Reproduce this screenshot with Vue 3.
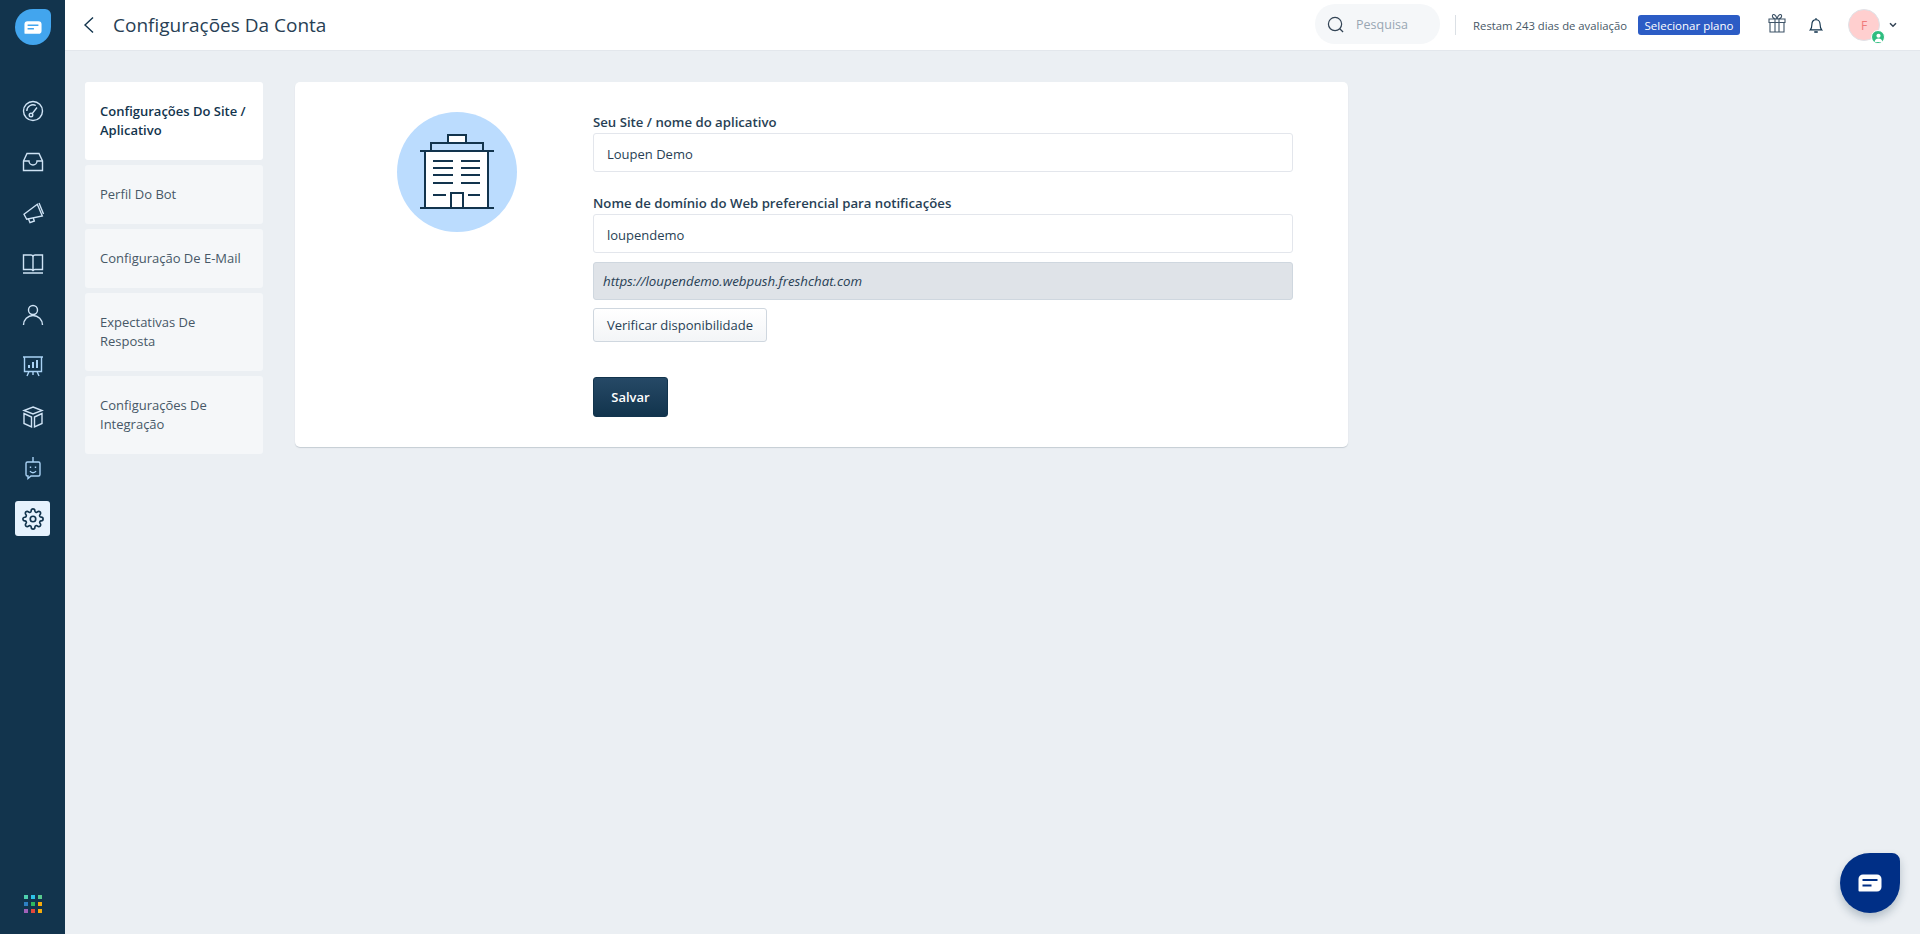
<script setup>
const navItems = [
  { label: 'Configurações Do Site / Aplicativo', active: true, tall: true },
  { label: 'Perfil Do Bot' },
  { label: 'Configuração De E-Mail' },
  { label: 'Expectativas De Resposta', tall: true },
  { label: 'Configurações De Integração', tall: true }
]
const dots = ['#4fcfae', '#2dc3e8', '#58c98d', '#2e80c2', '#2fb85f', '#f5ab0c', '#a061b8', '#e4483a', '#f5ab0c']
const buildingLines = [49, 56, 63, 71]
</script>

<template>
  <div class="app">
    <aside class="sidebar">
      <div class="logo">
        <svg width="18" height="13" viewBox="0 1 20 14"><path d="M4 1h12a3.5 3.5 0 0 1 3.5 3.5v7a3.5 3.5 0 0 1-3.5 3.5H1.5a1 1 0 0 1-1-1V4.500A3.500 3.500 0 0 1 4 1z" fill="#fff"/><path d="M4 5.500h12M4 9.500h7" stroke="#42a5ee" stroke-width="1.700"/></svg>
      </div>
      <nav class="side-nav">
        <a class="side-item">
          <svg viewBox="0 0 24 24" class="ico"><circle cx="12" cy="12" r="9.500"/><circle cx="10" cy="16" r="1.800"/><path d="M11.200 14.600 16 8.500M5.800 12a6.200 6.200 0 0 1 9-5.500"/></svg>
        </a>
        <a class="side-item">
          <svg viewBox="0 0 24 24" class="ico"><path d="M2.500 11 6 3.500h12l3.500 7.500v9.500h-19z"/><path d="M2.500 11H8a4 4 0 0 0 8 0h5.500"/></svg>
        </a>
        <a class="side-item">
          <svg viewBox="0 0 24 24" class="ico"><path d="M3 13.300 16.300 3.300l5 11.700-15.600 3.300z"/><path d="m18 2 4.500 11M7.300 17.500 9 21.700l4.300-1.700-1-3"/></svg>
        </a>
        <a class="side-item">
          <svg viewBox="0 0 24 24" class="ico"><path d="M2.500 3H10a2 2 0 0 1 2 2v14a2 2 0 0 0-2-1.500H2.500zM21.500 3H14a2 2 0 0 0-2 2v14a2 2 0 0 1 2-1.500h7.500zM2 21h20"/></svg>
        </a>
        <a class="side-item">
          <svg viewBox="0 0 24 24" class="ico"><circle cx="12" cy="7" r="4.500"/><path d="M2.500 22a9.500 9.500 0 0 1 19 0"/></svg>
        </a>
        <a class="side-item">
          <svg viewBox="0 0 24 24" class="ico pale"><path d="M2 3h20M3.500 3v14.500h17V3M8 17.500 6 22M16 17.500l2 4.500M12 17.500V21"/><path d="M8 14v-3M12 14V8M16 14V6" stroke-width="2"/></svg>
        </a>
        <a class="side-item">
          <svg viewBox="0 0 24 24" class="ico"><path d="m12 2 9 3.500L12 9 3 5.500z"/><path d="M3 8.500 10.500 12v10L3 18.500zM21 8.500 13.500 12v10l7.500-3.500z"/></svg>
        </a>
        <a class="side-item">
          <svg viewBox="0 0 24 24" class="ico pale"><path d="M12 1v5"/><path d="M6.500 6h11A1.500 1.500 0 0 1 19 7.500v11a1.500 1.500 0 0 1-1.500 1.500H10l-3 2.500V20h-.5A1.500 1.500 0 0 1 5 18.500v-11A1.500 1.500 0 0 1 6.500 6z"/><path d="M9 15a3.500 3.500 0 0 0 6 0M9.500 10.500v1.500M14.500 10.500v1.500"/></svg>
        </a>
        <a class="side-item active">
          <svg viewBox="0 0 24 24" class="ico dark"><circle cx="12" cy="12" r="3"/><path d="M19.400 15a1.650 1.650 0 0 0 .33 1.820l.06.06a2 2 0 0 1 0 2.830 2 2 0 0 1-2.830 0l-.06-.06a1.650 1.650 0 0 0-1.820-.33 1.650 1.650 0 0 0-1 1.510V21a2 2 0 0 1-2 2 2 2 0 0 1-2-2v-.09A1.650 1.650 0 0 0 9 19.400a1.650 1.650 0 0 0-1.820.33l-.06.06a2 2 0 0 1-2.830 0 2 2 0 0 1 0-2.830l.06-.06a1.650 1.650 0 0 0 .33-1.820 1.650 1.650 0 0 0-1.510-1H3a2 2 0 0 1-2-2 2 2 0 0 1 2-2h.09A1.650 1.650 0 0 0 4.600 9a1.650 1.650 0 0 0-.33-1.820l-.06-.06a2 2 0 0 1 0-2.830 2 2 0 0 1 2.830 0l.06.06a1.650 1.650 0 0 0 1.820.33H9a1.650 1.650 0 0 0 1-1.510V3a2 2 0 0 1 2-2 2 2 0 0 1 2 2v.09a1.650 1.650 0 0 0 1 1.510 1.650 1.650 0 0 0 1.820-.33l.06-.06a2 2 0 0 1 2.830 0 2 2 0 0 1 0 2.830l-.06.06a1.650 1.650 0 0 0-.33 1.820V9a1.650 1.650 0 0 0 1.510 1H21a2 2 0 0 1 2 2 2 2 0 0 1-2 2h-.09a1.650 1.650 0 0 0-1.510 1z"/></svg>
        </a>
      </nav>
      <div class="apps">
        <i v-for="(c, i) in dots" :key="i" class="dot" :style="{ background: c }"></i>
      </div>
    </aside>

    <div class="main">
      <header class="topbar">
        <svg class="back" width="12" height="18" viewBox="0 0 12 18"><path d="M10 1.500 2 9l8 7.500" fill="none" stroke="#12344d" stroke-width="1.400"/></svg>
        <h1 class="title">Configurações Da Conta</h1>
        <div class="search">
          <svg width="17" height="17" viewBox="0 0 18 18" fill="none" stroke="#345" stroke-width="1.300"><circle cx="8.500" cy="8.500" r="7"/><path d="m13.500 13.500 3.500 3.500"/></svg>
          <span>Pesquisa</span>
        </div>
        <div class="divider"></div>
        <span class="trial">Restam 243 dias de avaliação</span>
        <button class="plan">Selecionar plano</button>
        <svg class="gift" width="18" height="20" viewBox="0 0 18 20" fill="none" stroke="#3f5468" stroke-width="1.100"><path d="M1 6h16v3.500H1zM2 9.500h14V19H2zM7 6v13M11 6v13M9 6C6 6 4 4.500 4.500 2.500S8 1.500 9 6zm0 0c3 0 5-1.500 4.500-3.500S10 1.500 9 6z"/></svg>
        <svg class="bell" width="14" height="18" viewBox="0 0 16 20" fill="none" stroke="#12344d" stroke-width="1.300"><path d="M1.500 15.500c1.500-1.500 1.800-3 1.800-6C3.300 6 5 4 8 4s4.700 2 4.700 5.500c0 3 .3 4.500 1.800 6z"/><path d="M8 4V2"/><path d="M6 18h4" stroke-width="1.800"/></svg>
        <div class="avatar">
          <span>F</span>
          <i class="status"><svg width="9" height="9" viewBox="0 0 10 10" fill="#fff"><circle cx="5" cy="3" r="2.300"/><path d="M.8 10a4.200 4 0 0 1 8.400 0z"/></svg></i>
        </div>
        <svg class="chev" width="8" height="6" viewBox="0 0 8 6"><path d="m1 1.200 3 3 3-3" fill="none" stroke="#345" stroke-width="1.500"/></svg>
      </header>

      <div class="content">
        <ul class="menu">
          <li v-for="item in navItems" :key="item.label" class="menu-item" :class="{ on: item.active, tall: item.tall }">{{ item.label }}</li>
        </ul>

        <section class="card">
          <div class="emblem">
            <svg width="120" height="120" viewBox="0 0 120 120">
              <rect x="28" y="39" width="63" height="57" fill="#fff"/>
              <rect x="34" y="31" width="52" height="8" fill="#bcdcfd" stroke="#12344d" stroke-width="2"/>
              <rect x="51" y="23" width="18" height="8" fill="#fff" stroke="#12344d" stroke-width="2"/>
              <g fill="none" stroke="#12344d" stroke-width="2">
                <path d="M23 39h74M23 96h74M28 39v57M91 39v57"/>
                <path v-for="y in buildingLines" :key="y" :d="`M36 ${y}h20M64 ${y}h19`"/>
                <path d="M36 83h13M71 83h12M54 96V81h12v15"/>
              </g>
            </svg>
          </div>
          <form class="form" @submit.prevent>
            <label class="lbl">Seu Site / nome do aplicativo</label>
            <input class="field" value="Loupen Demo" />
            <label class="lbl second">Nome de domínio do Web preferencial para notificações</label>
            <input class="field" value="loupendemo" />
            <div class="preview">https://loupendemo.webpush.freshchat.com</div>
            <button type="button" class="check">Verificar disponibilidade</button>
            <button type="submit" class="save">Salvar</button>
          </form>
        </section>
      </div>
    </div>

    <button class="chat">
      <svg width="24" height="18" viewBox="0 1 24 17"><path d="M5 1h14a4.500 4.500 0 0 1 4.500 4.500v8A4.500 4.500 0 0 1 19 18H1.500a1 1 0 0 1-1-1V5.500A4.500 4.500 0 0 1 5 1z" fill="#fff"/><path d="M4.500 6.500h15M4.500 12h9" stroke="#002f86" stroke-width="2"/></svg>
    </button>
  </div>
</template>

<style scoped>
.app {
  display: flex;
  height: 934px;
  overflow: hidden;
  background: #ebeff3;
  font-family: "Open Sans", "Noto Sans", sans-serif;
  color: #12344d;
}
.sidebar {
  width: 65px;
  flex: none;
  background: #12344d;
  display: flex;
  flex-direction: column;
  align-items: center;
  padding: 9px 0 21px;
  box-sizing: border-box;
}
.logo {
  width: 36px;
  height: 36px;
  background: #42a5ee;
  border-radius: 50% 6px 50% 50%;
  display: flex;
  align-items: center;
  justify-content: center;
}
.side-nav {
  margin-top: 48px;
  display: flex;
  flex-direction: column;
  gap: 16px;
}
.side-item {
  width: 35px;
  height: 35px;
  border-radius: 3px;
  display: flex;
  align-items: center;
  justify-content: center;
}
.side-item.active { background: #e6f2fd; }
.ico {
  width: 24px;
  height: 24px;
  fill: none;
  stroke: #cfe3f5;
  stroke-width: 1.400;
}
.ico.pale { stroke: #a9d2f5; }
.ico.dark { stroke: #12344d; width: 22px; height: 22px; stroke-width: 1.800; }
.apps {
  margin-top: auto;
  display: grid;
  grid-template-columns: repeat(3, 4px);
  gap: 3px;
}
.dot { width: 4px; height: 4px; display: block; }
.main {
  flex: 1;
  min-width: 0;
  display: flex;
  flex-direction: column;
}
.topbar {
  height: 51px;
  flex: none;
  background: #fff;
  box-sizing: border-box;
  border-bottom: 1px solid #e3e7ec;
  display: flex;
  align-items: center;
  padding-right: 23px;
}
.back { margin-left: 18px; flex: none; }
.title {
  margin: 0 0 0 18px;
  font-size: 19px;
  font-weight: 400;
  color: #283f55;
}
.search {
  margin-left: auto;
  width: 125px;
  height: 40px;
  margin-bottom: 2px;
  box-sizing: border-box;
  padding-left: 12px;
  background: #f5f7f9;
  border-radius: 20px;
  display: flex;
  align-items: center;
  gap: 12px;
  font-size: 12.500px;
  color: #98a6b3;
}
.divider { width: 1px; height: 20px; background: #dbe0e5; margin-left: 15px; }
.trial { margin-left: 17px; font-size: 11.300px; color: #475867; white-space: nowrap; }
.plan {
  margin-left: 11px;
  width: 102px;
  height: 20px;
  padding: 0;
  border: 0;
  border-radius: 3px;
  background: #2c5cc5;
  color: #fff;
  font: 11.500px "Open Sans", sans-serif;
  white-space: nowrap;
}
.gift { margin-left: 28px; margin-bottom: 5px; flex: none; }
.bell { margin-left: 23px; flex: none; }
.avatar {
  margin-left: 25px;
  width: 32px;
  height: 32px;
  border-radius: 50%;
  background: #ffcfcf;
  border: 1px solid #dfe3e8;
  box-sizing: border-box;
  display: flex;
  align-items: center;
  justify-content: center;
  position: relative;
  font-size: 12px;
  color: #ef7a7a;
}
.status {
  position: absolute;
  right: -6px;
  bottom: -4px;
  width: 14px;
  height: 14px;
  border-radius: 50%;
  background: #2ebd7f;
  border: 1px solid #fff;
  box-sizing: border-box;
  display: flex;
  align-items: center;
  justify-content: center;
}
.chev { margin-left: 9px; flex: none; }
.content {
  flex: 1;
  display: flex;
  align-items: flex-start;
  padding: 31px 0 0 20px;
}
.menu {
  list-style: none;
  margin: 0;
  padding: 0;
  width: 178px;
  flex: none;
  display: flex;
  flex-direction: column;
  gap: 5px;
}
.menu-item {
  height: 59px;
  box-sizing: border-box;
  display: flex;
  align-items: center;
  padding: 0 15px;
  background: #f5f7f9;
  border-radius: 3px;
  font-size: 13px;
  line-height: 19px;
  color: #475867;
}
.menu-item.tall { height: 78px; }
.menu-item.on {
  background: #fff;
  color: #12344d;
  font-weight: 600;
}
.card {
  margin-left: 32px;
  width: 1053px;
  height: 365px;
  box-sizing: border-box;
  background: #fff;
  border-radius: 5px;
  box-shadow: 0 1px 1px #c5ccd3;
  display: flex;
  padding: 30px 0 0 102px;
}
.emblem {
  width: 120px;
  height: 120px;
  flex: none;
  border-radius: 50%;
  background: #bbdcfe;
}
.emblem svg { display: block; }
.form {
  margin-left: 76px;
  width: 700px;
  display: flex;
  flex-direction: column;
  align-items: flex-start;
}
.lbl {
  font-size: 13.200px;
  font-weight: 600;
  line-height: 18px;
  margin-top: 1px;
  margin-bottom: 2px;
  color: #283f55;
}
.lbl.second { margin-top: 22px; }
.field {
  width: 100%;
  height: 39px;
  box-sizing: border-box;
  padding: 2px 13px 0;
  border: 1px solid #e3e6ec;
  border-radius: 3px;
  outline: 0;
  font: 13px "Open Sans", sans-serif;
  color: #283f55;
  background: #fff;
}
.preview {
  margin-top: 9px;
  width: 100%;
  height: 38px;
  box-sizing: border-box;
  padding-left: 9px;
  display: flex;
  align-items: center;
  background: #dfe3e8;
  border: 1px solid #cfd7df;
  border-radius: 3px;
  font-size: 13.300px;
  font-style: italic;
  color: #283f55;
}
.check {
  margin-top: 8px;
  width: 174px;
  height: 34px;
  padding: 0;
  box-sizing: border-box;
  background: linear-gradient(#fff, #f3f5f7);
  border: 1px solid #cfd7df;
  border-radius: 3px;
  font: 13px "Open Sans", sans-serif;
  color: #283f55;
}
.save {
  margin-top: 35px;
  width: 75px;
  height: 40px;
  padding: 0;
  border: 1px solid #12344d;
  border-radius: 3px;
  background: linear-gradient(#264966, #12344d);
  color: #fff;
  font: 600 13px "Open Sans", sans-serif;
}
.chat {
  position: fixed;
  left: 1840px;
  top: 853px;
  width: 60px;
  height: 60px;
  padding: 0;
  border: 0;
  background: #002f86;
  border-radius: 50% 8px 50% 50%;
  box-shadow: 0 5px 8px rgba(18, 52, 77, .25);
  display: flex;
  align-items: center;
  justify-content: center;
}
</style>

<style>
html, body { margin: 0; background: #ebeff3; }
</style>
